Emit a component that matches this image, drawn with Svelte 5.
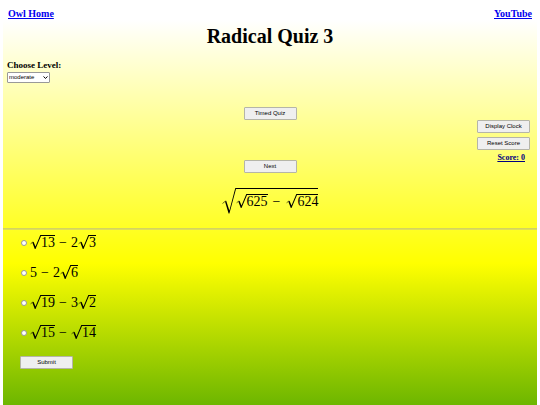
<script lang="ts">
	type Term = string | { root: Term[] };

	const levels = ["easy", "moderate", "hard"];
	const question: Term[] = [{ root: [{ root: ["625"] }, "−", { root: ["624"] }] }];
	const options: Term[][] = [
		[{ root: ["13"] }, "−", "2", { root: ["3"] }],
		["5", "−", "2", { root: ["6"] }],
		[{ root: ["19"] }, "−", "3", { root: ["2"] }],
		[{ root: ["15"] }, "−", { root: ["14"] }],
	];

	let level = $state("moderate");
	let answer = $state<number | null>(null);
	let score = $state(0);
</script>

{#snippet math(terms: Term[])}
	{#each terms as term}
		{#if typeof term !== "string"}
			{@const nested = typeof term.root[0] !== "string"}
			<span class="root" class:nested>
				{#if nested}
					<svg class="surd" viewBox="0 0 14 26" aria-hidden="true">
						<path d="M0.5 15.5 L3.5 13" fill="none" stroke="#000" stroke-width="0.6" />
						<path d="M3 13.4 L4.2 12.8 L7.4 22.5 L13.3 0 H14 V1 L7.4 25.5 H6.6 Z" />
					</svg>
				{:else}
					<svg class="surd" viewBox="0 0 11 14" aria-hidden="true">
						<path d="M0.6 8.8 L2.8 7" fill="none" stroke="#000" stroke-width="0.6" />
						<path d="M2.3 7.4 L3.5 6.8 L5.5 11.6 L10.3 0 H11 V1 L5.5 14 H4.8 Z" />
					</svg>
				{/if}
				<span class="radicand">{@render math(term.root)}</span>
			</span>
		{:else if term === "−"}
			<span class="minus">−</span>
		{:else}
			<span>{term}</span>
		{/if}
	{/each}
{/snippet}

<div class="page">
	<nav class="links">
		<a href="#home">Owl Home</a>
		<a href="#youtube">YouTube</a>
	</nav>

	<h1>Radical Quiz 3</h1>

	<div class="level">
		<label for="level">Choose Level:</label>
		<div class="select">
			<select id="level" bind:value={level}>
				{#each levels as item}
					<option value={item}>{item}</option>
				{/each}
			</select>
			<svg viewBox="0 0 5 3" aria-hidden="true">
				<path d="M0.5 0.5 L2.5 2.4 L4.5 0.5" fill="none" stroke="#000" />
			</svg>
		</div>
	</div>

	<div class="controls">
		<div class="main-buttons">
			<button>Timed Quiz</button>
			<button>Next</button>
		</div>
		<div class="side-buttons">
			<button>Display Clock</button>
			<button onclick={() => (score = 0)}>Reset Score</button>
			<span class="score">Score: {score}</span>
		</div>
	</div>

	<div class="question math">{@render math(question)}</div>

	<hr />

	<form class="answers" onsubmit={(e) => e.preventDefault()}>
		{#each options as option, i}
			<label class="option">
				<input type="radio" name="answer" value={i} bind:group={answer} />
				<span class="math">{@render math(option)}</span>
			</label>
		{/each}
		<button type="submit">Submit</button>
	</form>
</div>

<style>
	:global(body) {
		margin: 0;
		background: #fff;
	}

	.page {
		box-sizing: border-box;
		min-height: 100vh;
		margin: 0 3px;
		padding-top: 8px;
		background: linear-gradient(#fff 5%, #ff0 65%, #008000 126%);
		font-family: "Liberation Serif", "Times New Roman", serif;
		color: #000;
	}

	.links {
		display: flex;
		justify-content: space-between;
		padding: 0 5px;
		font-size: 10px;
		font-weight: bold;
		line-height: 12px;
	}

	a {
		color: #0000ee;
	}

	h1 {
		margin: 4px 0 12px;
		font-size: 20px;
		line-height: 24px;
		text-align: center;
	}

	.level {
		display: flex;
		flex-direction: column;
		align-items: flex-start;
		gap: 1px;
		padding: 0 4px;
		font-size: 9px;
		font-weight: bold;
		line-height: 11px;
	}

	.select {
		position: relative;
		display: flex;
	}

	.select svg {
		position: absolute;
		top: 4px;
		right: 2px;
		width: 5px;
		height: 3px;
		pointer-events: none;
	}

	select {
		appearance: none;
		box-sizing: border-box;
		width: 43px;
		height: 11px;
		padding: 0 8px 0 1px;
		border: 1px solid #999;
		border-radius: 1px;
		background: #fff;
		color: #000;
		font-family: "Liberation Sans", Arial, sans-serif;
		font-size: 6px;
		line-height: 9px;
	}

	.controls {
		display: grid;
		grid-template-columns: 1fr auto 1fr;
		padding: 24px 7px 0;
	}

	.main-buttons {
		grid-column: 2;
		display: flex;
		flex-direction: column;
		gap: 40px;
	}

	.side-buttons {
		justify-self: end;
		display: flex;
		flex-direction: column;
		gap: 4px;
		padding-top: 13px;
	}

	button {
		box-sizing: border-box;
		width: 53px;
		height: 13px;
		padding: 0;
		border: 1px solid #b5b5a8;
		border-radius: 1px;
		background: #efefef;
		color: #000;
		font-family: "Liberation Sans", Arial, sans-serif;
		font-size: 6px;
		line-height: 11px;
	}

	.score {
		align-self: flex-end;
		padding-right: 5px;
		color: #000080;
		font-size: 8px;
		font-weight: bold;
		line-height: 8px;
		text-decoration: underline;
	}

	.math {
		display: inline-flex;
		align-items: flex-end;
		font-size: 14px;
		line-height: 13px;
	}

	.question {
		display: flex;
		justify-content: center;
		padding: 15px 0 14px;
	}

	.root {
		display: inline-flex;
		align-items: stretch;
	}

	.surd {
		flex: none;
		width: 11px;
		height: 14px;
	}

	.radicand {
		display: inline-flex;
		align-items: flex-end;
		border-top: 1px solid #000;
	}

	.nested > .surd {
		width: 14px;
		height: 26px;
	}

	.nested > .radicand {
		padding-bottom: 6px;
	}

	.minus {
		margin: 0 4px;
	}

	.question .minus {
		margin: 0 6px 0 5px;
	}

	hr {
		margin: 0;
		border: 0;
		border-top: 1px solid #d4d460;
		border-bottom: 1px solid #dede58;
	}

	.answers {
		display: flex;
		flex-direction: column;
		align-items: flex-start;
		gap: 4px;
		padding: 0 17px;
	}

	.option {
		display: flex;
		align-items: center;
		gap: 3px;
		height: 26px;
	}

	.option .math {
		padding-bottom: 3px;
	}

	input {
		appearance: none;
		box-sizing: border-box;
		width: 6px;
		height: 6px;
		margin: 0 0 0 1px;
		border: 1px solid #999;
		border-radius: 50%;
		background: #fff;
	}

	input:checked {
		background: #0075ff;
	}

	.answers button {
		margin-top: 6px;
	}
</style>
